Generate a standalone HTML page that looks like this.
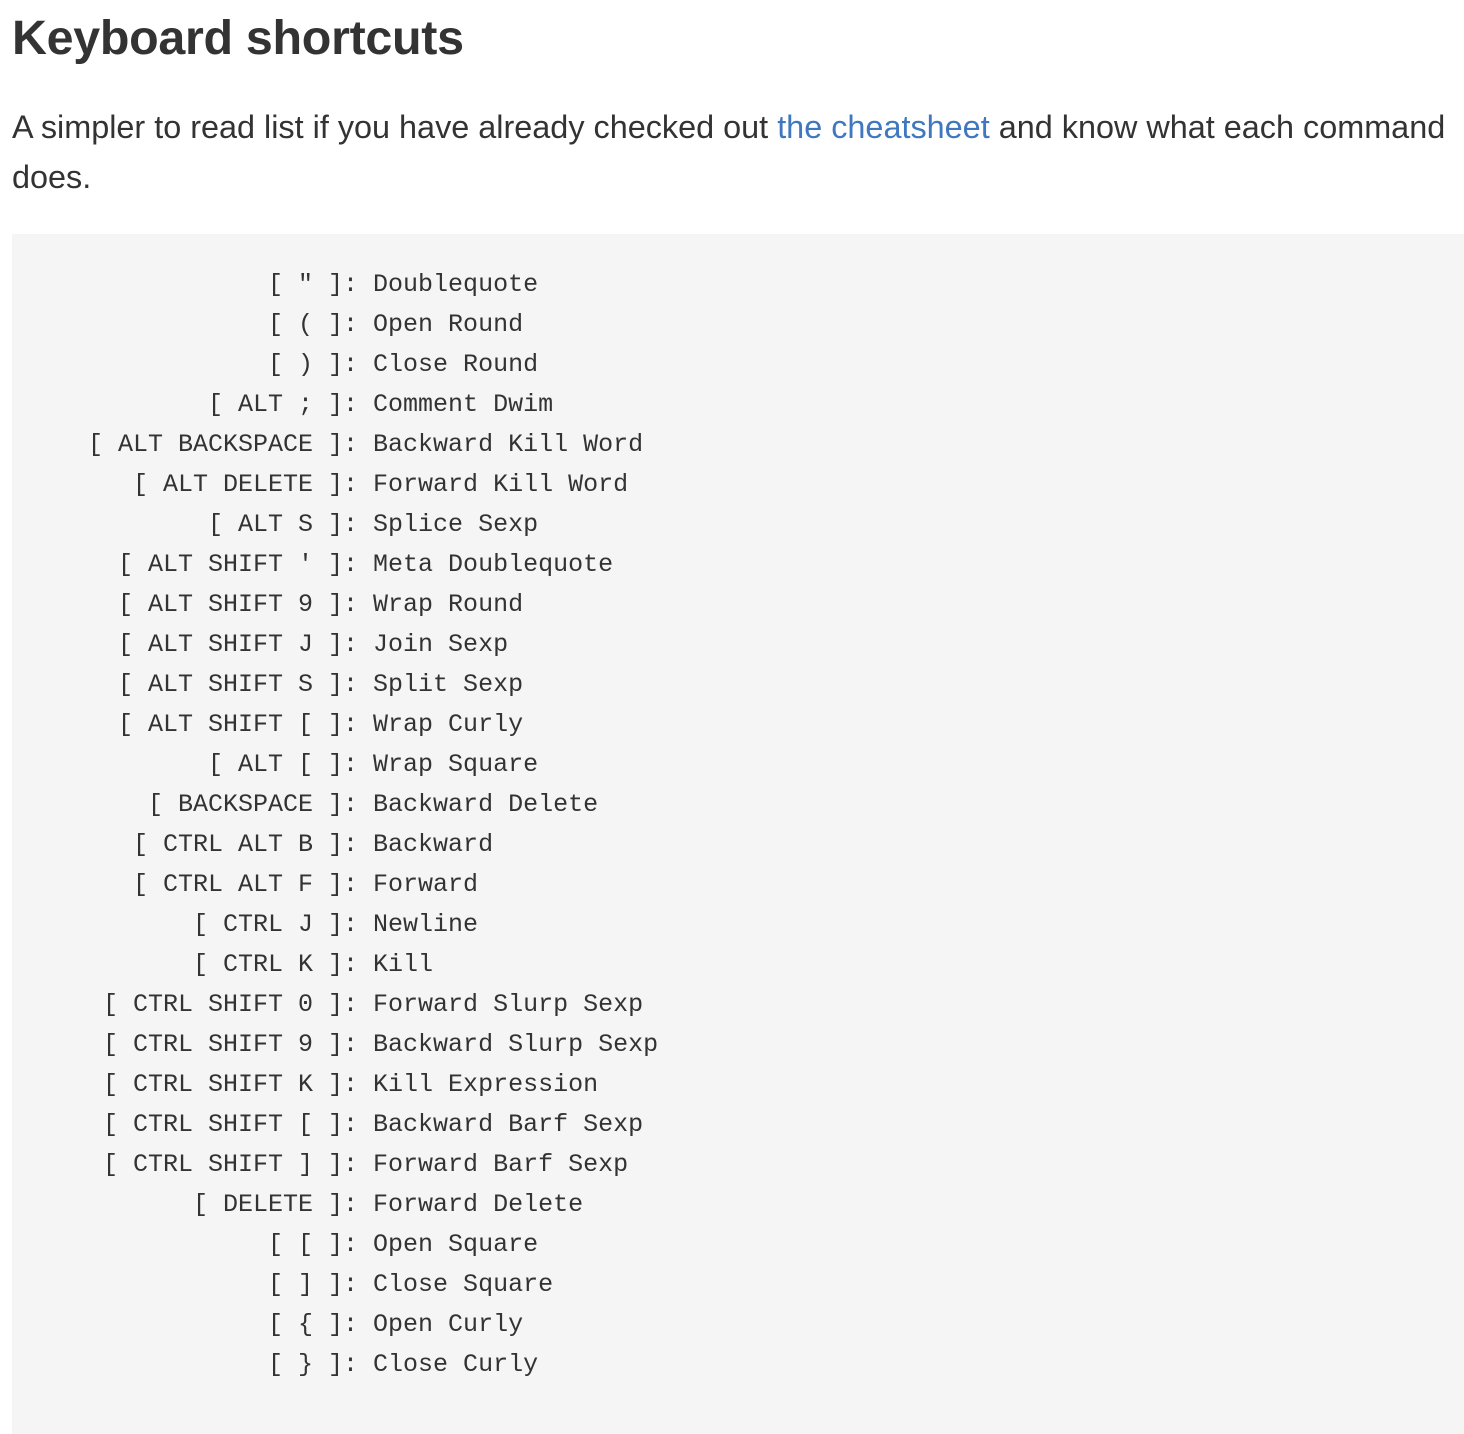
<!DOCTYPE html>
<html><head><meta charset="utf-8"><style>
html,body{margin:0;padding:0;background:#fff;width:1464px;height:1410px;overflow:hidden}
body{font-family:"Liberation Sans",Helvetica,Arial,sans-serif;color:#333}
h1{font-size:48.4px;font-weight:bold;margin:0;position:absolute;left:12px;top:8px;line-height:60px;letter-spacing:-0.3px}
p{position:absolute;left:12px;top:102px;width:1452px;margin:0;font-size:32.4px;line-height:50px}
a{color:#4078c0;text-decoration:none}
pre{position:absolute;left:12px;top:234px;width:1452px;height:1200px;margin:0;background:#f5f5f5;box-sizing:border-box;padding:31px 0 0 76px;font-family:"Liberation Mono","DejaVu Sans Mono",monospace;font-size:25px;line-height:40px;color:#333}
</style></head><body>
<h1>Keyboard shortcuts</h1>
<p>A simpler to read list if you have already checked out <a>the cheatsheet</a> and know what each command does.</p>
<pre>            [ " ]: Doublequote
            [ ( ]: Open Round
            [ ) ]: Close Round
        [ ALT ; ]: Comment Dwim
[ ALT BACKSPACE ]: Backward Kill Word
   [ ALT DELETE ]: Forward Kill Word
        [ ALT S ]: Splice Sexp
  [ ALT SHIFT ' ]: Meta Doublequote
  [ ALT SHIFT 9 ]: Wrap Round
  [ ALT SHIFT J ]: Join Sexp
  [ ALT SHIFT S ]: Split Sexp
  [ ALT SHIFT [ ]: Wrap Curly
        [ ALT [ ]: Wrap Square
    [ BACKSPACE ]: Backward Delete
   [ CTRL ALT B ]: Backward
   [ CTRL ALT F ]: Forward
       [ CTRL J ]: Newline
       [ CTRL K ]: Kill
 [ CTRL SHIFT 0 ]: Forward Slurp Sexp
 [ CTRL SHIFT 9 ]: Backward Slurp Sexp
 [ CTRL SHIFT K ]: Kill Expression
 [ CTRL SHIFT [ ]: Backward Barf Sexp
 [ CTRL SHIFT ] ]: Forward Barf Sexp
       [ DELETE ]: Forward Delete
            [ [ ]: Open Square
            [ ] ]: Close Square
            [ { ]: Open Curly
            [ } ]: Close Curly
</pre>
</body></html>
